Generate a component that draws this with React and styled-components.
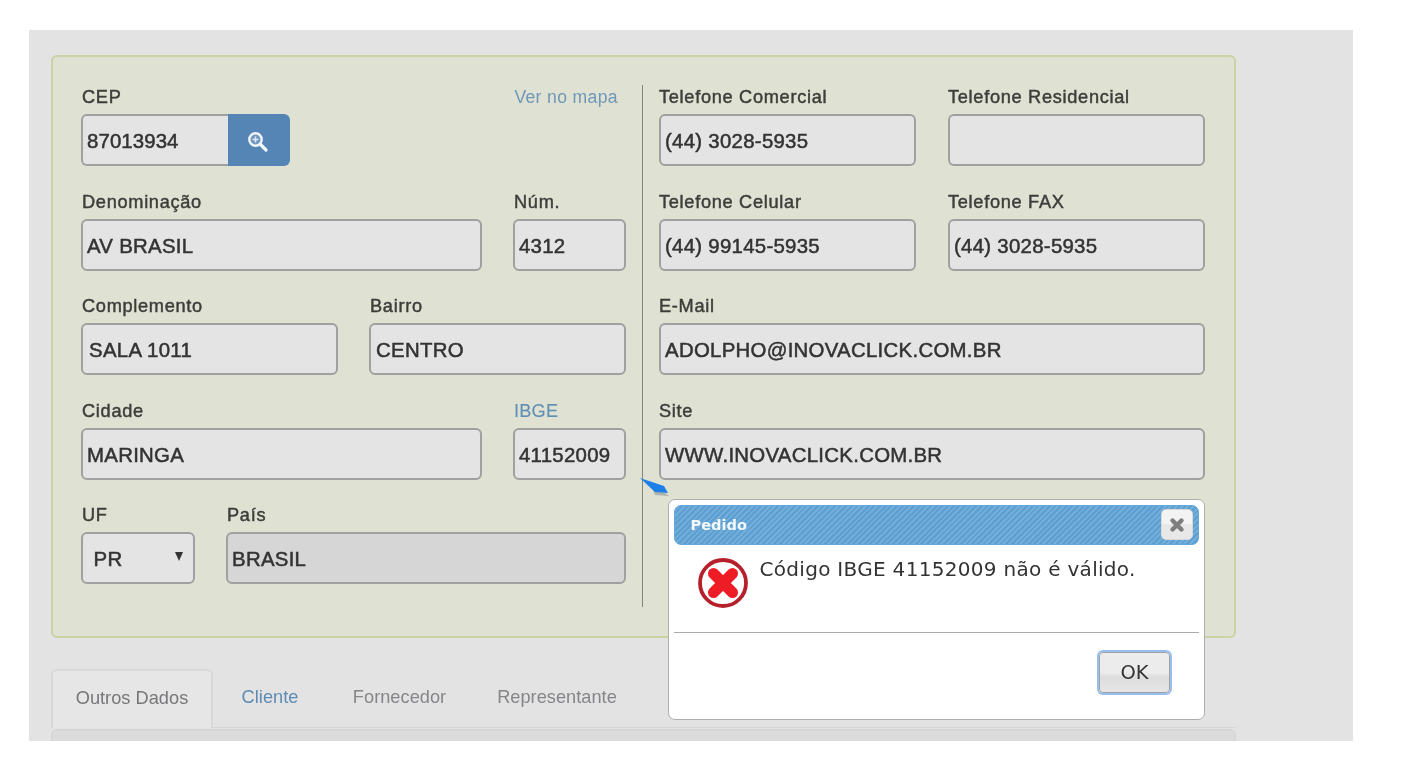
import React from 'react';
import styled, { createGlobalStyle } from 'styled-components';

const Global = createGlobalStyle`
  html, body { margin: 0; padding: 0; background: #fff; overflow: hidden; }
  body { font-family: "Liberation Sans", Arial, sans-serif; }
`;
const Page = styled.div`
  width: 1407px; height: 759px; padding: 30px 0 0 29px; box-sizing: border-box;
  filter: blur(0.5px);
`;
const Canvas = styled.div`
  position: relative; width: 1324px; height: 711px; background: #e3e3e3; overflow: hidden;
  padding: 25px 0 0 22px; box-sizing: border-box;
`;
const Panel = styled.div`
  width: 1185px; height: 583px; box-sizing: border-box; background: #dfe1d3;
  border: 2px solid #c9d3a3; border-radius: 6px; padding: 26px 29px 0 28px;
  display: flex;
`;
const Label = styled.label`
  font-size: 18.2px; line-height: 28px; padding-left: 1px;
  color: ${p => p.$link ? '#5f8fb4' : '#3d3d3a'};
  -webkit-text-stroke: ${p => p.$link ? '0.1px #5f8fb4' : '0.45px #3d3d3a'};
  letter-spacing: ${p => p.$link ? 0.2 : 0.7}px; white-space: nowrap;
`;
const LeftCol = styled.div`
  width: 545px; display: flex; flex-direction: column; gap: 18px; flex: none;
`;
const Divider = styled.div`
  width: 1.5px; height: 522px; background: #84857f; margin: 2px 16px 0 15.5px; flex: none;
`;
const RightCol = styled(LeftCol)`
  width: 546px;
  ${Label} { margin-left: -1px; }
`;
const Row = styled.div`
  display: flex; gap: ${p => p.$gap || 31}px; height: 86.5px;
`;
const Field = styled.div`
  display: flex; flex-direction: column; width: ${p => p.$w ? p.$w + 'px' : 'auto'};
  flex: ${p => p.$w ? 'none' : 1}; min-width: 0;
`;
const LabelRow = styled.div`
  display: flex; justify-content: space-between; height: 31px; align-items: flex-start;
`;
const MapLink = styled.a`
  font-size: 17.6px; line-height: 28px; color: #6f98b8; margin-right: 8px;
  letter-spacing: 0.35px;
`;
const InputBox = styled.div`
  height: 52px; box-sizing: border-box; background: ${p => p.$disabled ? '#d6d6d6' : '#e4e4e4'};
  border: 2px solid #a0a0a0; border-radius: 6px;
  font-size: 20.4px; line-height: 50px; color: #333; padding-left: ${p => p.$pad || 4}px;
  -webkit-text-stroke: 0.5px #333; white-space: nowrap; overflow: hidden;
  letter-spacing: 0.28px;
`;
const Group = styled.div`
  display: flex; width: 209px; height: 52px;
`;
const GroupInput = styled(InputBox)`
  width: 147px; flex: none; border-radius: 6px 0 0 6px; border-right: none;
  letter-spacing: 0.1px;
`;
const SearchButton = styled.button`
  width: 62px; height: 52px; flex: none; padding: 1px 5px 0 0; border: none;
  background: #5585b5; border-radius: 0 6px 6px 0;
  display: flex; align-items: center; justify-content: center;
`;
const SelectBox = styled(InputBox)`
  position: relative; padding-left: 10.5px;
`;
const Caret = styled.span`
  position: absolute; right: 10px; top: 18px; width: 0; height: 0;
  border-left: 4.5px solid transparent; border-right: 4.5px solid transparent;
  border-top: 9px solid #333;
`;
const Tabs = styled.div`
  display: flex; margin-top: 31px; height: 59px; width: 1185px; align-items: stretch;
  box-sizing: border-box; border-bottom: 1px solid #d6d6d6;
`;
const Tab = styled.div`
  box-sizing: border-box; height: 59px; width: ${p => p.$w}px; font-size: 18.2px;
  line-height: 56px; text-align: center; flex: none; letter-spacing: 0.03px;
  color: ${p => p.$color};
  ${p => p.$active ? `
    background: #e6e6e6; border: 2px solid #d8d8d8; border-bottom: none;
    border-radius: 6px 6px 0 0; line-height: 54px;
  ` : ''}
`;
const TabBody = styled.div`
  width: 1185px; height: 30px; margin-top: 1px; background: #dcdcdc;
  border: 2px solid #d6d6d6; border-bottom: none; border-radius: 6px 6px 0 0;
  box-sizing: border-box;
`;
const Pointer = styled.svg`
  position: absolute; left: 610px; top: 447px;
`;
const Dialog = styled.div`
  position: absolute; left: 639px; top: 469px; width: 537px; height: 221px;
  box-sizing: border-box; background: #fff; border: 1.5px solid #aeaeae; border-radius: 7px;
  padding: 4.5px 5px 4.5px 4.5px; display: flex; flex-direction: column;
`;
const DialogBar = styled.div`
  height: 40px; flex: none; box-sizing: border-box; border-radius: 7px;
  border: 1px solid #63a9e0;
  background: repeating-linear-gradient(135deg, #5b9fd3 0 2px, #74add8 2px 4px);
  display: flex; align-items: center; justify-content: space-between;
  padding: 0 5px 0 16px;
`;
const DialogTitle = styled.span`
  font-family: "DejaVu Sans", sans-serif; font-weight: 700; font-size: 14.6px; color: #f2f8fc;
`;
const CloseButton = styled.button`
  width: 32px; height: 31px; padding: 0; box-sizing: border-box; border: 1px solid #d8d8d8;
  border-radius: 5px; background: linear-gradient(#f3f3f3 0 50%, #e8e8e8 50% 100%);
  display: flex; align-items: center; justify-content: center;
`;
const DialogBody = styled.div`
  height: 88px; flex: none; display: flex; padding: 12px 0 0 23px; box-sizing: border-box;
  border-bottom: 1.5px solid #aaa; gap: 11px;
`;
const Message = styled.p`
  margin: -1px 0 0; font-family: "DejaVu Sans", sans-serif; font-size: 20px; line-height: 26px; color: #333;
  white-space: nowrap; letter-spacing: 0.3px;
`;
const DialogFooter = styled.div`
  flex: 1; display: flex; justify-content: flex-end; align-items: flex-start; padding: 19px 29px 0 0;
`;
const OkButton = styled.button`
  width: 71px; height: 41px; box-sizing: border-box; border: 1px solid #a2a2a2;
  box-shadow: 0 0 0 2px #98bdf2; border-radius: 4px;
  background: linear-gradient(#ececec 0 50%, #dddddd 62%, #e5e5e5 100%);
  font-family: "DejaVu Sans", sans-serif; font-size: 19.5px; color: #333; padding: 0;
`;

const F = ({ label, value, w, disabled, pad, link }) => (
  <Field $w={w}>
    <LabelRow><Label $link={link}>{label}</Label></LabelRow>
    <InputBox $disabled={disabled} $pad={pad}>{value}</InputBox>
  </Field>
);

export default function App() {
  return (
    <Page>
      <Global />
      <Canvas>
        <Panel>
          <LeftCol>
            <Row>
              <Field>
                <LabelRow><Label>CEP</Label><MapLink>Ver no mapa</MapLink></LabelRow>
                <Group>
                  <GroupInput>87013934</GroupInput>
                  <SearchButton aria-label="Buscar">
                    <svg width="22" height="22" viewBox="0 0 22 22" fill="none">
                      <circle cx="9.5" cy="9.5" r="6.2" fill="#6f97c2" stroke="#f2f5f9" strokeWidth="2.4" />
                      <path d="M14.5 14.5 L20 20" stroke="#f2f5f9" strokeWidth="3.2" strokeLinecap="round" />
                      <path d="M9.5 6.5v6M6.5 9.5h6" stroke="#e4e9f6" strokeWidth="1.5" />
                    </svg>
                  </SearchButton>
                </Group>
              </Field>
            </Row>
            <Row>
              <F label="Denominação" value="AV BRASIL" w={401} />
              <F label="Núm." value="4312" w={113} />
            </Row>
            <Row>
              <F label="Complemento" value="SALA 1011" w={257} pad={6} />
              <F label="Bairro" value="CENTRO" w={257} pad={5} />
            </Row>
            <Row>
              <F label="Cidade" value="MARINGA" w={401} />
              <F label="IBGE" value="41152009" w={113} link />
            </Row>
            <Row>
              <Field $w={114}>
                <LabelRow><Label>UF</Label></LabelRow>
                <SelectBox>PR<Caret /></SelectBox>
              </Field>
              <F label="País" value="BRASIL" w={400} disabled />
            </Row>
          </LeftCol>
          <Divider />
          <RightCol>
            <Row $gap={32}>
              <F label="Telefone Comercial" value="(44) 3028-5935" w={257} />
              <F label="Telefone Residencial" value="" w={257} />
            </Row>
            <Row $gap={32}>
              <F label="Telefone Celular" value="(44) 99145-5935" w={257} />
              <F label="Telefone FAX" value="(44) 3028-5935" w={257} />
            </Row>
            <Row>
              <F label="E-Mail" value="ADOLPHO@INOVACLICK.COM.BR" />
            </Row>
            <Row>
              <F label="Site" value="WWW.INOVACLICK.COM.BR" />
            </Row>
          </RightCol>
        </Panel>
        <Tabs>
          <Tab $active $w={162} $color="#77777a">Outros Dados</Tab>
          <Tab $w={114} $color="#5e8bb3">Cliente</Tab>
          <Tab $w={145} $color="#86868a">Fornecedor</Tab>
          <Tab $w={170} $color="#86868a">Representante</Tab>
        </Tabs>
        <TabBody />
        <Pointer width="32" height="22" viewBox="0 0 32 22">
          <path d="M14 13 L26 16 L30 19 L16 18 Z" fill="#7e8384" opacity="0.5" />
          <path d="M1 1 L25 9 L29 16 L16 15 Z" fill="#1f7fe8" />
        </Pointer>
        <Dialog>
          <DialogBar>
            <DialogTitle>Pedido</DialogTitle>
            <CloseButton aria-label="Fechar">
              <svg width="16" height="16" viewBox="0 0 16 16">
                <path d="M3.5 3.5 L12.5 12.5 M12.5 3.5 L3.5 12.5" stroke="#7e7e7e" strokeWidth="4.4" strokeLinecap="round" />
              </svg>
            </CloseButton>
          </DialogBar>
          <DialogBody>
            <svg width="52" height="52" viewBox="0 0 52 52" style={{ flex: 'none' }}>
              <circle cx="26" cy="26" r="23" fill="#fff" stroke="#b5202a" strokeWidth="3.8" />
              <path d="M16.5 16.5 L35.5 35.5 M35.5 16.5 L16.5 35.5" stroke="#ee1c25" strokeWidth="11" strokeLinecap="round" />
            </svg>
            <Message>Código IBGE 41152009 não é válido.</Message>
          </DialogBody>
          <DialogFooter>
            <OkButton>OK</OkButton>
          </DialogFooter>
        </Dialog>
      </Canvas>
    </Page>
  );
}
